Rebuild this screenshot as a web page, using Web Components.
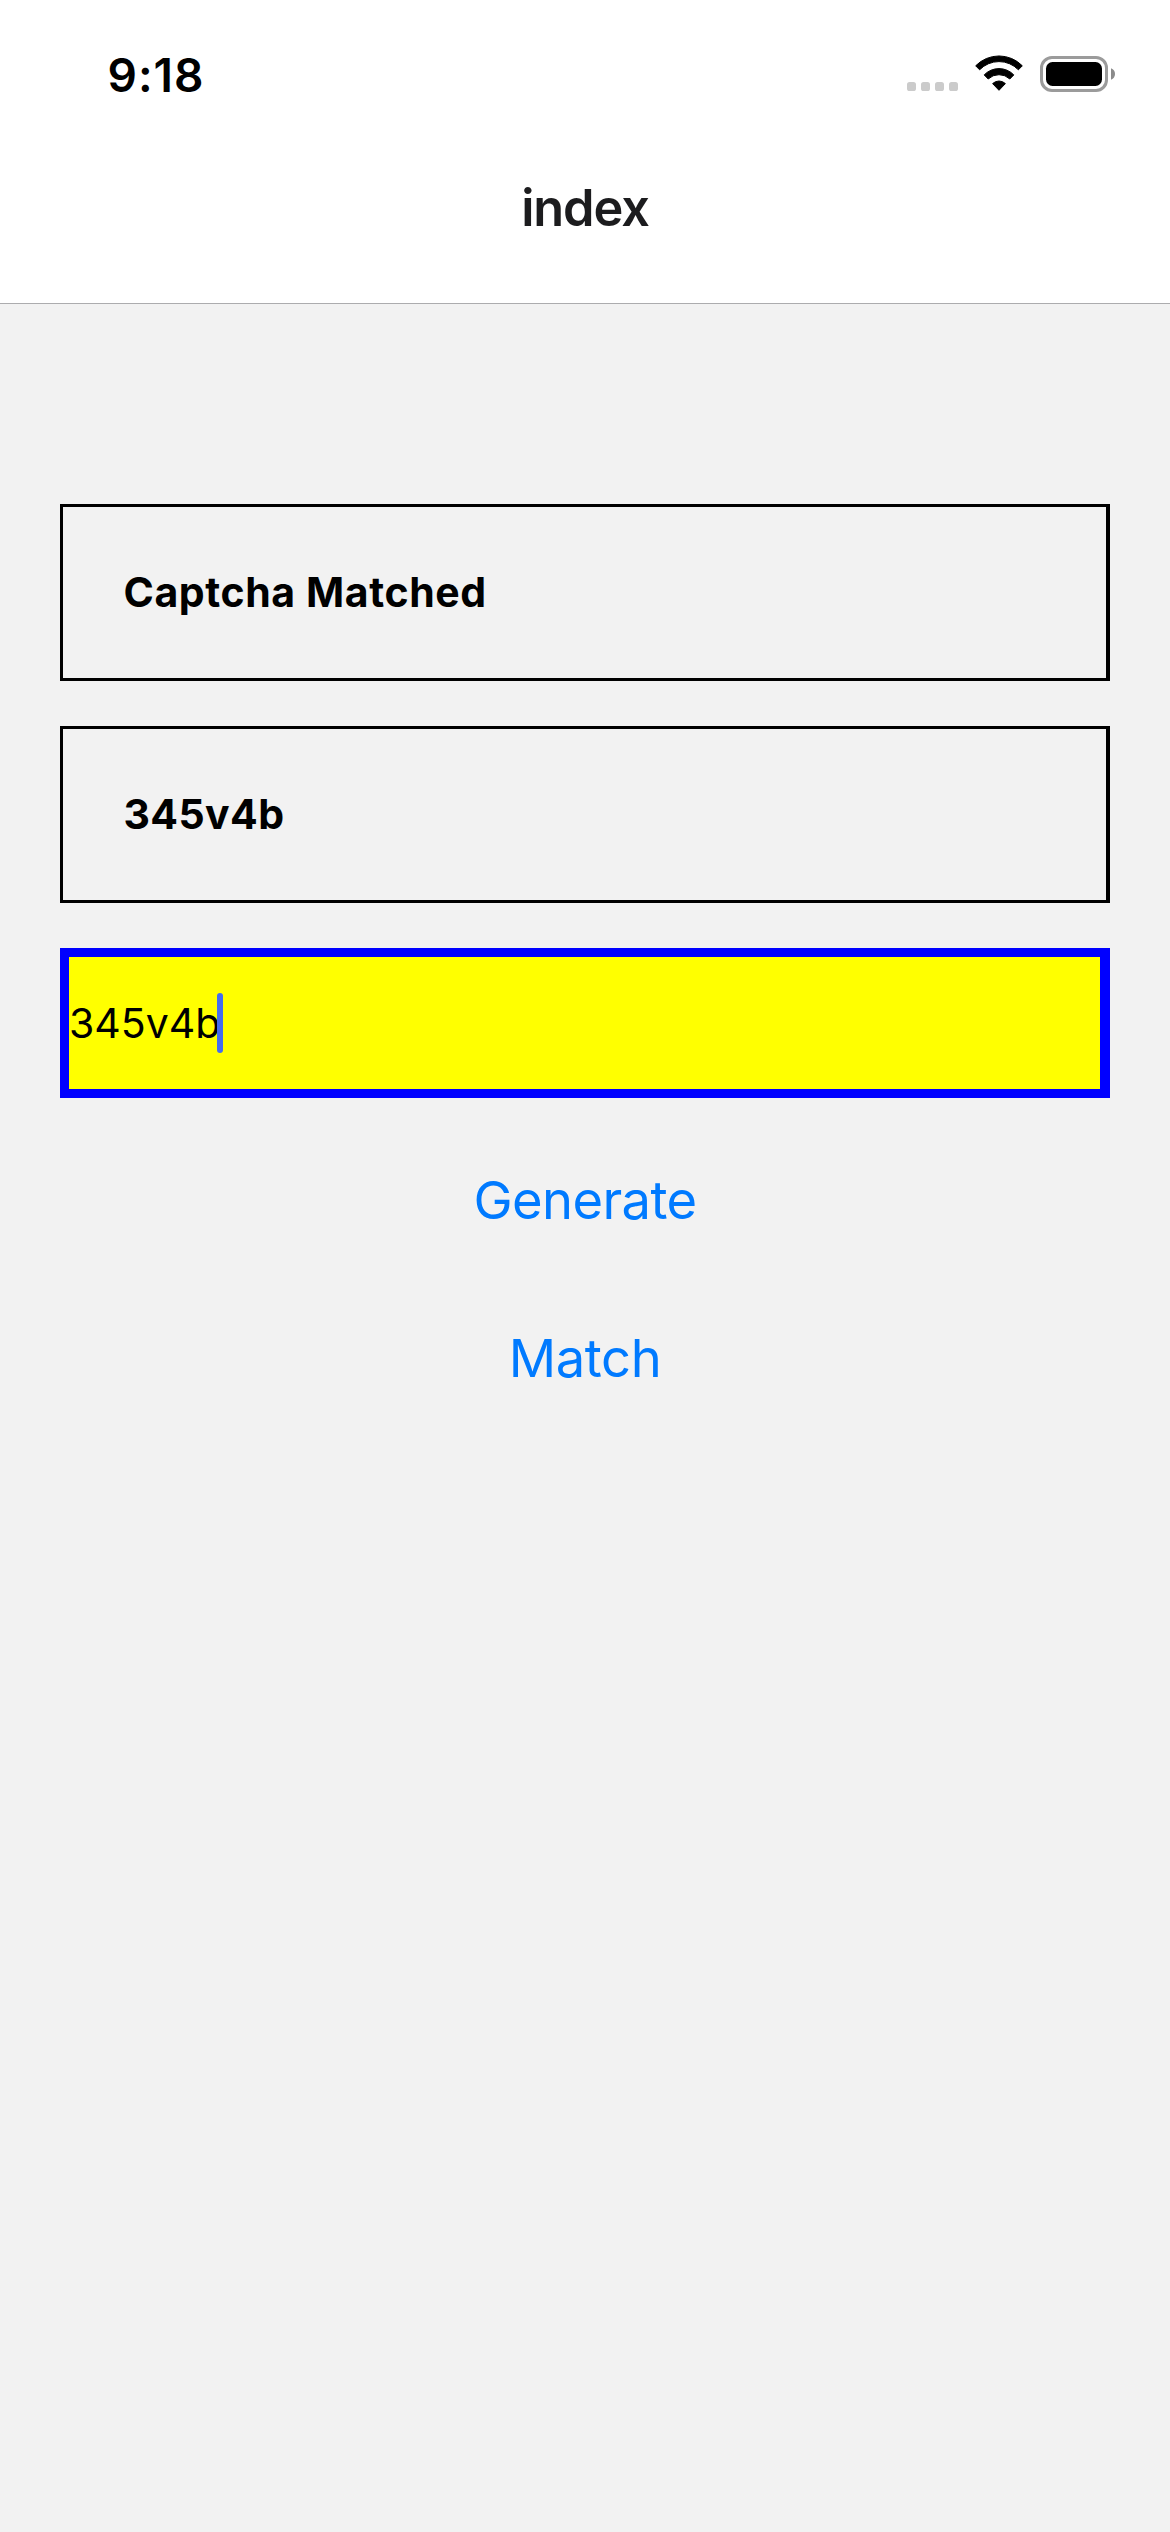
<!DOCTYPE html>
<html lang="en">
<head>
<meta charset="utf-8">
<title>index</title>
<style>
html, body { margin: 0; height: 100%; }
body { background: #f2f2f2; font-family: Inter, "Liberation Sans", sans-serif; color: #000; }
</style>
</head>
<body>
<app-screen>
  <status-bar slot="header">9:18</status-bar>
  <nav-header slot="header">index</nav-header>
  <text-box style="--track:.6px">Captcha Matched</text-box>
  <text-box style="--track:.4px">345v4b</text-box>
  <captcha-input>345v4b</captcha-input>
  <div>
    <link-button style="--track:-.6px">Generate</link-button>
    <link-button style="--track:-.4px">Match</link-button>
  </div>
</app-screen>
<script>
const define = (name, html) => customElements.define(name, class extends HTMLElement {
  constructor() {
    super();
    this.attachShadow({ mode: 'open' }).innerHTML = html;
  }
});

define('app-screen', `
  <style>
    :host { display: flex; flex-direction: column; min-height: 100%; }
    header { background: #fff; border-bottom: 1px solid #acacae; }
    main { display: flex; flex-direction: column; gap: 45px; padding: 200px 60px 0; }
    ::slotted(div) { margin-top: -22px; }
  </style>
  <header><slot name="header"></slot></header>
  <main><slot></slot></main>`);

define('status-bar', `
  <style>
    :host { display: flex; height: 150px; box-sizing: border-box; padding: 0 55px 0 107.5px; justify-content: space-between; }
    .time { font-size: 46px; font-weight: 600; line-height: 150px; letter-spacing: 1px; }
    .icons { display: flex; align-items: flex-start; padding-top: 55px; }
    svg { display: block; }
    .wifi { margin-left: 17px; }
    .battery { margin: 1px 0 0 17px; }
  </style>
  <span class="time"><slot></slot></span>
  <div class="icons">
    <svg class="dots" width="51" height="37" fill="#cbcbcb">
      <rect y="27" width="9" height="9" rx="2.6"/><rect x="14" y="27" width="9" height="9" rx="2.6"/>
      <rect x="28" y="27" width="9" height="9" rx="2.6"/><rect x="42" y="27" width="9" height="9" rx="2.6"/>
    </svg>
    <svg class="wifi" width="48" height="37" stroke="#000" stroke-width="1" stroke-linejoin="round">
      <path d="M.7 10.8A32.5 32.5 0 0 1 47.3 10.8L43.4 14.8A27 27 0 0 0 4.6 14.8Z"/>
      <path d="M9.2 19.9A20.5 20.5 0 0 1 38.8 19.9L34.8 24A15.7 15.7 0 0 0 13.2 24Z"/>
      <path d="M17.6 28.6A9.2 9.2 0 0 1 30.4 28.6L24 35.3Z"/>
    </svg>
    <svg class="battery" width="75" height="36">
      <rect x="1.5" y="1.5" width="65" height="33" rx="10.5" fill="none" stroke="#9b9b9b" stroke-width="3"/>
      <rect x="6" y="6" width="56" height="24" rx="6.5"/>
      <path d="M71 12.3Q75 14 75 18T71 23.7Z" fill="#8b8b8b"/>
    </svg>
  </div>`);

define('nav-header', `
  <style>
    :host { display: block; height: 153px; text-align: center; color: #1c1c1e;
      font-size: 50.5px; font-weight: 600; line-height: 115px; letter-spacing: -1.1px; }
  </style>
  <slot></slot>`);

define('text-box', `
  <style>
    :host { display: block; box-sizing: border-box; height: 177px; border: 3px solid #000; border-right-width: 4px;
      padding-left: 60.5px; font-size: 41px; font-weight: 700; line-height: 171px; letter-spacing: var(--track); }
  </style>
  <slot></slot>`);

define('captcha-input', `
  <style>
    :host { display: flex; align-items: center; box-sizing: border-box; height: 150px; background: #ff0;
      border: 9px solid #00f; border-right-width: 10px; font-size: 41px; line-height: 132px; }
    .caret { width: 6px; height: 60px; border-radius: 3px; background: #446bf0; margin-left: -3.3px; }
  </style>
  <slot></slot><span class="caret"></span>`);

define('link-button', `
  <style>
    :host { display: block; height: 158px; line-height: 159px; text-align: center; color: #007aff;
      font-size: 52.5px; letter-spacing: var(--track); }
  </style>
  <slot></slot>`);
</script>
</body>
</html>
